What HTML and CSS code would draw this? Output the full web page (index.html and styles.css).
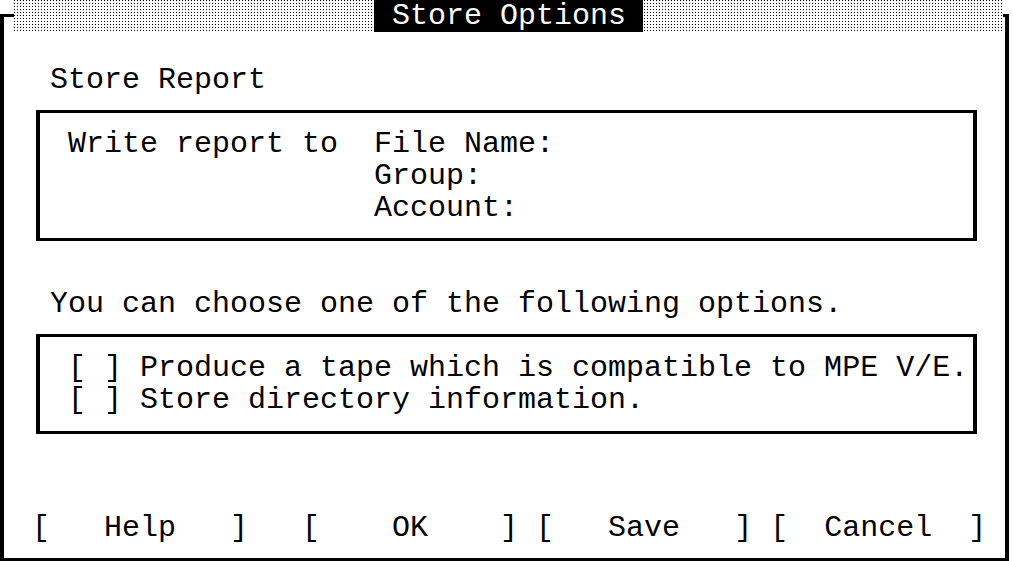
FILE: index.html
```html
<!DOCTYPE html>
<html>
<head>
    <title>Store Options</title>
    <link rel="stylesheet" href="styles.css">
</head>
<body>

<div class="frame">
    <div class="band"><span class="title">Store Options</span></div>

    <p class="label">Store Report</p>

    <div class="box report">
        <span>Write report to</span>
        <div>
            <div>File Name:</div>
            <div>Group:</div>
            <div>Account:</div>
        </div>
    </div>

    <p class="label spaced">You can choose one of the following options.</p>

    <div class="box options">
        <div>[ ] Produce a tape which is compatible to MPE V/E.</div>
        <div>[ ] Store directory information.</div>
    </div>

    <div class="buttons">
        <span class="btn">[   Help   ]</span>
        <span class="btn ok">[    OK    ]</span>
        <span class="btn">[   Save   ]</span>
        <span class="btn">[  Cancel  ]</span>
    </div>
</div>

</body>
</html>
```

FILE: styles.css
```css
* {
    box-sizing: border-box;
}
body {
    margin: 0;
    background: #fff;
    color: #000;
    font: 30px/32px "Liberation Mono", monospace;
}

/* whole screen is an 18 x 32 character grid */
.frame {
    position: relative;
    width: 1009px;
    height: 547px;
    margin-top: 14px;
    border: solid #000;
    border-width: 3px 4px;
    padding-top: 47px;
}
.band {
    position: absolute;
    top: -17px;
    left: 10px;
    width: 989px;
    height: 32px;
    display: flex;
    justify-content: center;
    background-color: #000;
    background-image:
        linear-gradient(90deg, transparent 1px, #fff 1px),
        linear-gradient(transparent 1px, #fff 1px);
    background-size: 3px 3px;
}
.title {
    background: #000;
    color: #fff;
    padding: 0 17px 0 18px;
}

.label {
    margin: 0 0 0 46px;
}
.label.spaced {
    margin-top: 47px;
}

.box {
    border: solid #000;
    border-width: 3px 4px;
    margin: 14px 28px 0 32px;
    padding: 15px 0 14px 28px;
}
.report {
    display: grid;
    grid-template-columns: 306px auto;
}
.options {
    padding-bottom: 15px;
}

.buttons {
    display: flex;
    gap: 18px;
    margin: 78px 0 0 28px;
    white-space: pre;
}
.ok {
    margin-left: 36px;
}
```
